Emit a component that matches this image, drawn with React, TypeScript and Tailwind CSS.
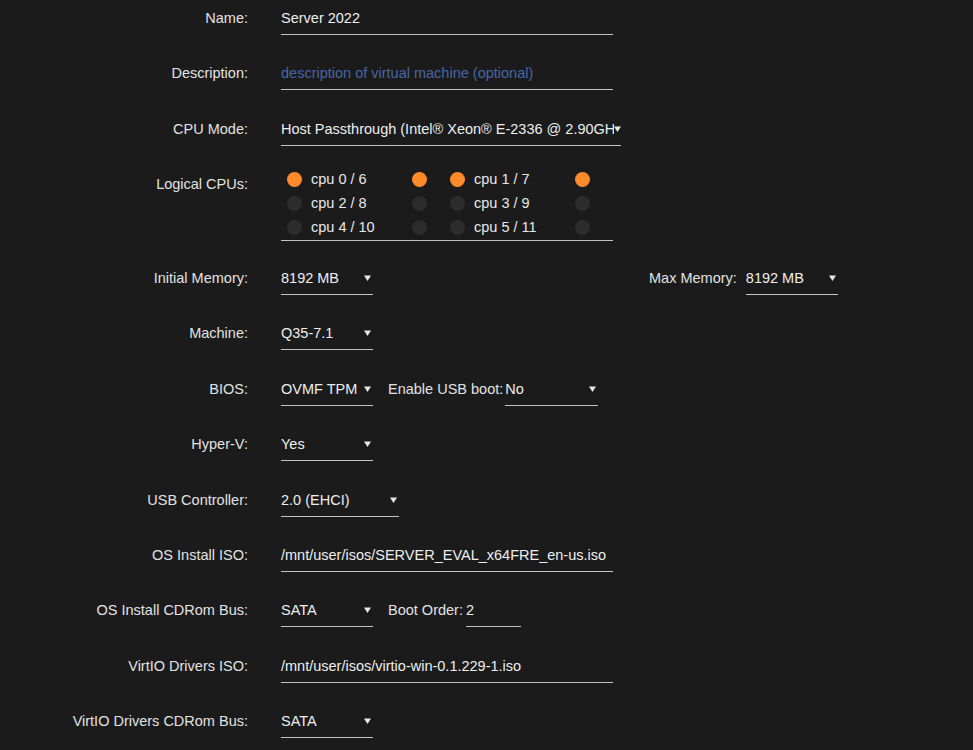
import React from "react";

const Arrow = () => (
  <svg width="7" height="6" viewBox="0 0 7 6" className="shrink-0">
    <path d="M0 0.5 L7 0.5 L3.5 6 Z" fill="#e8e8e8" />
  </svg>
);

const Label = ({ children }: { children: React.ReactNode }) => (
  <div className="w-[248px] shrink-0 pt-2 text-right leading-5 text-[#e2e2e2]">{children}</div>
);

const Field = ({ children, w }: { children: React.ReactNode; w: string }) => (
  <div className={`${w} pt-2 pb-[6px] border-b border-[#c4c4c4] leading-5 text-[#eeeeee]`}>{children}</div>
);

const Sel = ({ value, w }: { value: string; w: string }) => (
  <div className={`${w} flex items-center justify-between pt-2 pb-[6px] border-b border-[#c4c4c4] leading-5 text-[#eeeeee] pr-[2px]`}>
    <span>{value}</span>
    <Arrow />
  </div>
);

const Row = ({ children }: { children: React.ReactNode }) => (
  <div className="flex h-[55.4px] items-start">{children}</div>
);

const Dot = ({ on }: { on: boolean }) => (
  <span className={`block h-[15px] w-[15px] shrink-0 rounded-full ${on ? "bg-[#ff8a2a]" : "bg-[#2c2c2c]"}`} />
);

const CpuGroup = ({ label, on }: { label: string; on: boolean }) => (
  <div className="flex h-6 w-[165px] items-center">
    <Dot on={on} />
    <span className="ml-[9px] w-[101px] text-[#e8e8e8]">{label}</span>
    <Dot on={on} />
  </div>
);

export default function App() {
  return (
    <div
      className="min-h-[750px] w-full bg-[#1b1b1b] text-[14.5px]"
      style={{ fontFamily: '"Liberation Sans", Arial, sans-serif' }}
    >
      <Row>
        <Label>Name:</Label>
        <div className="ml-[33px]">
          <Field w="w-[332px]">Server 2022</Field>
        </div>
      </Row>
      <Row>
        <Label>Description:</Label>
        <div className="ml-[33px]">
          <Field w="w-[332px]">
            <span className="text-[#4766a6]">description of virtual machine (optional)</span>
          </Field>
        </div>
      </Row>
      <Row>
        <Label>CPU Mode:</Label>
        <div className="ml-[33px]">
          <div className="flex w-[340px] items-center pt-2 pb-[6px] border-b border-[#c4c4c4] leading-5 text-[#eeeeee]">
            <span className="w-[334px] overflow-hidden whitespace-nowrap">
              Host Passthrough (Intel® Xeon® E-2336 @ 2.90GHz)
            </span>
            <Arrow />
          </div>
        </div>
      </Row>
      <div className="flex h-[93.8px] items-start">
        <Label>Logical CPUs:</Label>
        <div className="ml-[33px]">
          <div className="w-[332px] pt-[1.3px] pb-[1px] pl-[6px] border-b border-[#c4c4c4] leading-5">
            <div className="flex">
              <CpuGroup label="cpu 0 / 6" on />
              <CpuGroup label="cpu 1 / 7" on />
            </div>
            <div className="flex">
              <CpuGroup label="cpu 2 / 8" on={false} />
              <CpuGroup label="cpu 3 / 9" on={false} />
            </div>
            <div className="flex">
              <CpuGroup label="cpu 4 / 10" on={false} />
              <CpuGroup label="cpu 5 / 11" on={false} />
            </div>
          </div>
        </div>
      </div>
      <Row>
        <Label>Initial Memory:</Label>
        <div className="ml-[33px] flex items-start">
          <Sel value="8192 MB" w="w-[92px]" />
          <div className="ml-[276px] pt-2 leading-5 text-[#e2e2e2]">Max Memory:</div>
          <div className="ml-[9px]">
            <Sel value="8192 MB" w="w-[92px]" />
          </div>
        </div>
      </Row>
      <Row>
        <Label>Machine:</Label>
        <div className="ml-[33px]">
          <Sel value="Q35-7.1" w="w-[92px]" />
        </div>
      </Row>
      <Row>
        <Label>BIOS:</Label>
        <div className="ml-[33px] flex items-start">
          <Sel value="OVMF TPM" w="w-[92px]" />
          <div className="ml-[15px] pt-2 leading-5 text-[#e2e2e2]">Enable USB boot:</div>
          <div className="ml-[2px]">
            <Sel value="No" w="w-[93px]" />
          </div>
        </div>
      </Row>
      <Row>
        <Label>Hyper-V:</Label>
        <div className="ml-[33px]">
          <Sel value="Yes" w="w-[92px]" />
        </div>
      </Row>
      <Row>
        <Label>USB Controller:</Label>
        <div className="ml-[33px]">
          <Sel value="2.0 (EHCI)" w="w-[118px]" />
        </div>
      </Row>
      <Row>
        <Label>OS Install ISO:</Label>
        <div className="ml-[33px]">
          <Field w="w-[332px]">/mnt/user/isos/SERVER_EVAL_x64FRE_en-us.iso</Field>
        </div>
      </Row>
      <Row>
        <Label>OS Install CDRom Bus:</Label>
        <div className="ml-[33px] flex items-start">
          <Sel value="SATA" w="w-[92px]" />
          <div className="ml-[15px] pt-2 leading-5 text-[#e2e2e2]">Boot Order:</div>
          <div className="ml-[3px]">
            <Field w="w-[55px]">2</Field>
          </div>
        </div>
      </Row>
      <Row>
        <Label>VirtIO Drivers ISO:</Label>
        <div className="ml-[33px]">
          <Field w="w-[332px]">/mnt/user/isos/virtio-win-0.1.229-1.iso</Field>
        </div>
      </Row>
      <Row>
        <Label>VirtIO Drivers CDRom Bus:</Label>
        <div className="ml-[33px]">
          <Sel value="SATA" w="w-[92px]" />
        </div>
      </Row>
    </div>
  );
}
